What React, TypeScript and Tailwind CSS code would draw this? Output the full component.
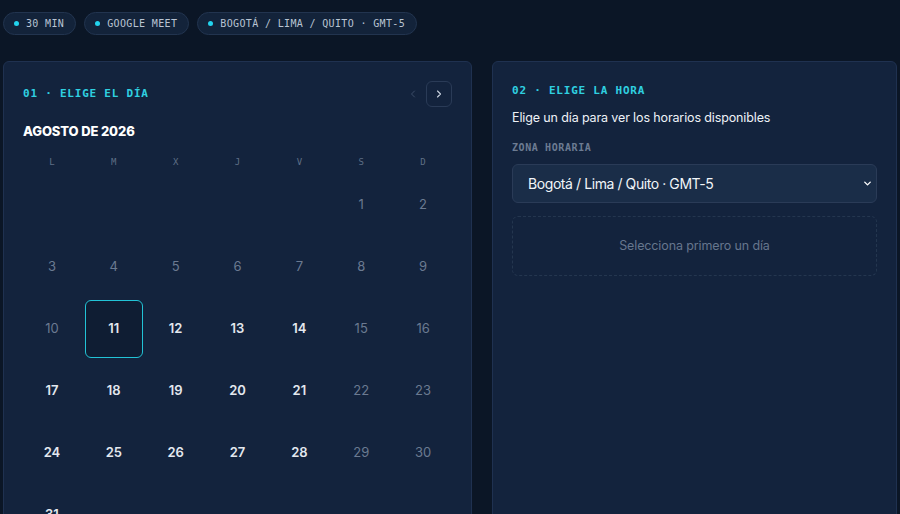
import { ChevronLeft, ChevronRight, ChevronDown } from "lucide-react";

const mono = "font-['DejaVu_Sans_Mono',monospace]";
const sans = "font-['Inter','Noto_Sans',sans-serif]";

const pills = ["30 MIN", "GOOGLE MEET", "BOGOTÁ / LIMA / QUITO · GMT-5"];
const weekdays = ["L", "M", "X", "J", "V", "S", "D"];

// August 2026 starts on Saturday
const cells: (number | null)[] = [null, null, null, null, null, ...Array.from({ length: 31 }, (_, i) => i + 1)];

function Day({ day, col }: { day: number | null; col: number }) {
  if (day === null) return <div className="h-[58px]" />;
  const weekend = col >= 5;
  const past = day < 11;
  const selected = day === 11;
  const muted = weekend || past;
  return (
    <div
      className={`flex h-[58px] items-center justify-center rounded-md text-[13px] ${
        selected ? "border border-[#22c3d6] bg-[#0f1d33]" : ""
      } ${muted ? "font-normal text-[#6b7a91]" : "font-semibold text-[#e3e8ef]"}`}
    >
      {day}
    </div>
  );
}

export default function App() {
  return (
    <div className={`min-h-screen bg-[#0b1626] px-[3px] pt-3 ${sans}`}>
      <div className="flex gap-2">
        {pills.map((p) => (
          <div
            key={p}
            className={`flex h-[23px] items-center gap-[7px] rounded-full border border-[#22344f] bg-[#13233a] pl-[10px] pr-[11px] text-[10px] tracking-[0.035em] text-[#b9c4d3] ${mono}`}
          >
            <span className="h-[5px] w-[5px] rounded-full bg-[#22d3ee]" />
            {p}
          </div>
        ))}
      </div>

      <div className="mt-[26px] grid grid-cols-[469px_405px] gap-5">
        <section className="h-[480px] rounded-md border border-[#1f3150] bg-[#13233d] px-[19px] pt-[19px]">
          <div className="flex h-[26px] items-center justify-between">
            <span className={`text-[11px] font-bold tracking-[0.07em] text-[#2fd0e0] ${mono}`}>01 · ELIGE EL DÍA</span>
            <div className="flex items-center gap-[7px]">
              <button className="flex h-[26px] w-[13px] items-center justify-center text-[#3c4d68]">
                <ChevronLeft size={12} strokeWidth={2} />
              </button>
              <button className="flex h-[26px] w-[26px] items-center justify-center rounded-md border border-[#2a3b57] text-[#c9d3e0]">
                <ChevronRight size={12} strokeWidth={2.2} />
              </button>
            </div>
          </div>
          <h2 className="mt-[15px] text-[13px] font-extrabold tracking-[-0.01em] text-white">AGOSTO DE 2026</h2>
          <div className="mt-[14px] grid grid-cols-7 gap-x-1">
            {weekdays.map((w) => (
              <div key={w} className={`text-center text-[9px] text-[#5f6f86] ${mono}`}>
                {w}
              </div>
            ))}
          </div>
          <div className="mt-[7px] grid grid-cols-7 gap-1">
            {cells.map((d, i) => (
              <Day key={i} day={d} col={i % 7} />
            ))}
          </div>
        </section>

        <section className="h-[480px] rounded-md border border-[#1f3150] bg-[#13233d] px-[19px] pt-[21px]">
          <div className={`text-[11px] font-bold tracking-[0.07em] text-[#2fd0e0] ${mono}`}>02 · ELIGE LA HORA</div>
          <p className="mt-[9px] text-[12.5px] tracking-[-0.01em] text-[#eef2f7]">Elige un día para ver los horarios disponibles</p>
          <div className={`mt-[13px] text-[10px] font-bold tracking-[0.06em] text-[#6c7b92] ${mono}`}>ZONA HORARIA</div>
          <div className="mt-[9px] flex h-[39px] items-center justify-between rounded-md border border-[#2a3b57] bg-[#1a2d48] pl-[15px] pr-[3px] text-[14px] tracking-[-0.03em] text-[#f1f5f9]">
            <span>Bogotá / Lima / Quito · GMT-5</span>
            <ChevronDown size={11} strokeWidth={3} className="text-white" />
          </div>
          <div className="mt-[13px] flex h-[60px] items-center justify-center rounded-md border border-dashed border-[#24364f] text-[12.5px] tracking-[-0.01em] text-[#66768d]">
            Selecciona primero un día
          </div>
        </section>
      </div>
    </div>
  );
}
